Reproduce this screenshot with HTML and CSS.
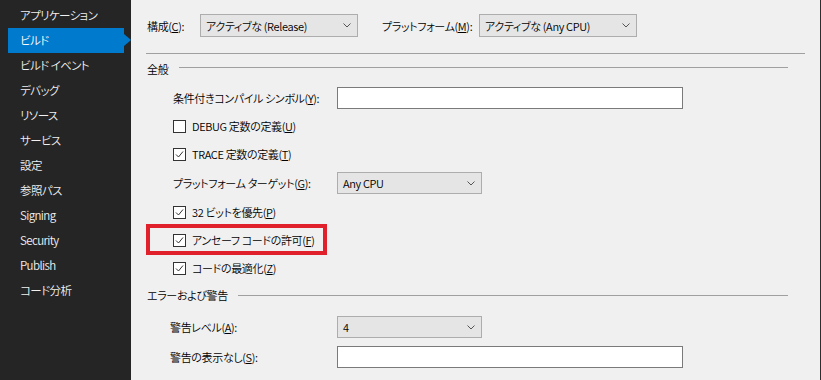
FILE: index.html
```html
<!DOCTYPE html>
<html lang="ja">
<head>
<meta charset="utf-8">
<title>ビルド</title>
<link rel="stylesheet" href="styles.css">
</head>
<body>
<div class="app">
  <nav class="sidebar">
    <div class="nav-item">アプリケーション</div>
    <div class="nav-item selected">ビルド</div>
    <div class="nav-item">ビルド イベント</div>
    <div class="nav-item">デバッグ</div>
    <div class="nav-item">リソース</div>
    <div class="nav-item">サービス</div>
    <div class="nav-item">設定</div>
    <div class="nav-item">参照パス</div>
    <div class="nav-item">Signing</div>
    <div class="nav-item">Security</div>
    <div class="nav-item">Publish</div>
    <div class="nav-item">コード分析</div>
  </nav>
  <main class="main">
    <div class="topbar">
      <span class="top-label cfg">構成(<u>C</u>):</span>
      <div class="select w158"><span>アクティブな (Release)</span><svg class="chev" width="8" height="5" viewBox="0 0 8 5"><polyline points="0.5,0.5 4,4 7.5,0.5" fill="none" stroke="#555" stroke-width="1"/></svg></div>
      <span class="top-label plat">プラットフォーム(<u>M</u>):</span>
      <div class="select w158"><span>アクティブな (Any CPU)</span><svg class="chev" width="8" height="5" viewBox="0 0 8 5"><polyline points="0.5,0.5 4,4 7.5,0.5" fill="none" stroke="#555" stroke-width="1"/></svg></div>
    </div>
    <div class="rule"></div>

    <section class="section">
      <div class="sec-head"><span>全般</span><div class="sec-line"></div></div>
      <div class="group">
        <div class="row">
          <span class="label">条件付きコンパイル シンボル(<u>Y</u>):</span>
          <div class="input"></div>
        </div>
        <div class="row">
          <span class="cb"><svg width="13" height="13" viewBox="0 0 13 13"><rect x="0.5" y="0.5" width="12" height="12" fill="#fff" stroke="#333"/></svg></span>
          <span>DEBUG 定数の定義(<u>U</u>)</span>
        </div>
        <div class="row">
          <span class="cb"><svg width="13" height="13" viewBox="0 0 13 13"><rect x="0.5" y="0.5" width="12" height="12" fill="#fff" stroke="#333"/><polyline points="3,6.5 5.5,9 10,3.5" fill="none" stroke="#333" stroke-width="1"/></svg></span>
          <span>TRACE 定数の定義(<u>T</u>)</span>
        </div>
        <div class="row tall">
          <span class="label">プラットフォーム ターゲット(<u>G</u>):</span>
          <div class="select w145"><span>Any CPU</span><svg class="chev" width="8" height="5" viewBox="0 0 8 5"><polyline points="0.5,0.5 4,4 7.5,0.5" fill="none" stroke="#555" stroke-width="1"/></svg></div>
        </div>
        <div class="row">
          <span class="cb"><svg width="13" height="13" viewBox="0 0 13 13"><rect x="0.5" y="0.5" width="12" height="12" fill="#fff" stroke="#333"/><polyline points="3,6.5 5.5,9 10,3.5" fill="none" stroke="#333" stroke-width="1"/></svg></span>
          <span>32 ビットを優先(<u>P</u>)</span>
        </div>
        <div class="row highlighted">
          <span class="cb"><svg width="13" height="13" viewBox="0 0 13 13"><rect x="0.5" y="0.5" width="12" height="12" fill="#fff" stroke="#333"/><polyline points="3,6.5 5.5,9 10,3.5" fill="none" stroke="#333" stroke-width="1"/></svg></span>
          <span>アンセーフ コードの許可(<u>F</u>)</span>
          <span class="mark"></span>
        </div>
        <div class="row">
          <span class="cb"><svg width="13" height="13" viewBox="0 0 13 13"><rect x="0.5" y="0.5" width="12" height="12" fill="#fff" stroke="#333"/><polyline points="3,6.5 5.5,9 10,3.5" fill="none" stroke="#333" stroke-width="1"/></svg></span>
          <span>コードの最適化(<u>Z</u>)</span>
        </div>
      </div>
    </section>

    <section class="section">
      <div class="sec-head short"><span>エラーおよび警告</span><div class="sec-line"></div></div>
      <div class="group group2">
        <div class="row tall">
          <span class="label l2">警告レベル(<u>A</u>):</span>
          <div class="select w145"><span>4</span><svg class="chev" width="8" height="5" viewBox="0 0 8 5"><polyline points="0.5,0.5 4,4 7.5,0.5" fill="none" stroke="#555" stroke-width="1"/></svg></div>
        </div>
        <div class="row tall">
          <span class="label l2">警告の表示なし(<u>S</u>):</span>
          <div class="input"></div>
        </div>
      </div>
    </section>
  </main>
</div>
</body>
</html>
```

FILE: styles.css
```css
* { box-sizing: border-box; }

html, body {
  margin: 0;
  padding: 0;
  width: 821px;
  height: 380px;
  overflow: hidden;
}

body {
  font-family: "Noto Sans CJK JP", "Noto Sans", sans-serif;
  font-size: 11px;
  font-weight: 350;
  letter-spacing: -0.35px;
  font-feature-settings: "palt";
  color: #000;
}

u { text-underline-offset: 1px; }

.app {
  display: flex;
  height: 380px;
}

.sidebar {
  width: 131px;
  flex: none;
  background: #252526;
  padding-top: 3px;
}

.nav-item {
  height: 25px;
  line-height: 25px;
  padding-left: 20px;
  color: #f1f1f1;
  white-space: nowrap;
  font-size: 11.5px;
  letter-spacing: -0.6px;
}

.nav-item.selected {
  position: relative;
  margin-left: 8px;
  width: 116px;
  padding-left: 12px;
  background: #007acc;
  color: #fff;
}

.nav-item.selected::after {
  content: "";
  position: absolute;
  left: 100%;
  top: 6px;
  border-left: 7px solid #007acc;
  border-top: 6px solid transparent;
  border-bottom: 6px solid transparent;
}

.main {
  flex: 1;
  background: #f0f0f0;
  border-right: 1px solid #2d2d30;
}

.topbar {
  display: flex;
  align-items: center;
  padding: 14px 0 0 16px;
}

.top-label { white-space: nowrap; }
.top-label.cfg { width: 53px; }
.top-label.plat { width: 97px; margin-left: 24px; }

.select {
  height: 23px;
  display: flex;
  align-items: center;
  justify-content: space-between;
  padding: 0 6px 0 5px;
  background: #e5e5e5;
  border: 1px solid #adadad;
  white-space: nowrap;
}

.w158 { width: 158px; }
.w145 { width: 145px; height: 22px; }

.chev { display: block; }

.rule {
  height: 1px;
  background: #a0a0a0;
  margin: 16px 15px 0 15px;
}

.section {
  padding-left: 16px;
}

.sec-head {
  height: 30px;
  display: flex;
  align-items: center;
}

.sec-head.short { height: 26px; }

.sec-line {
  flex: 1;
  height: 1px;
  background: #a0a0a0;
  margin: 0 32px 4px 11px;
}

.sec-head.short .sec-line { margin-bottom: 0; margin-left: 10px; }

.group {
  padding-left: 26px;
}

.group2 {
  padding-left: 23px;
  padding-top: 4px;
}

.row {
  height: 28px;
  display: flex;
  align-items: center;
  white-space: nowrap;
}

.row.tall { height: 30px; }

.label { width: 164px; }
.label.l2 { width: 167px; }

.input {
  width: 346px;
  height: 22px;
  background: #fff;
  border: 1px solid #7a7a7a;
}

.cb {
  width: 13px;
  height: 13px;
  margin-right: 6px;
  display: block;
}

.cb svg { display: block; }

.highlighted { position: relative; }

.mark {
  position: absolute;
  left: -27px;
  top: -2px;
  width: 181px;
  height: 31px;
  border: 4px solid #e0202a;
}
```
